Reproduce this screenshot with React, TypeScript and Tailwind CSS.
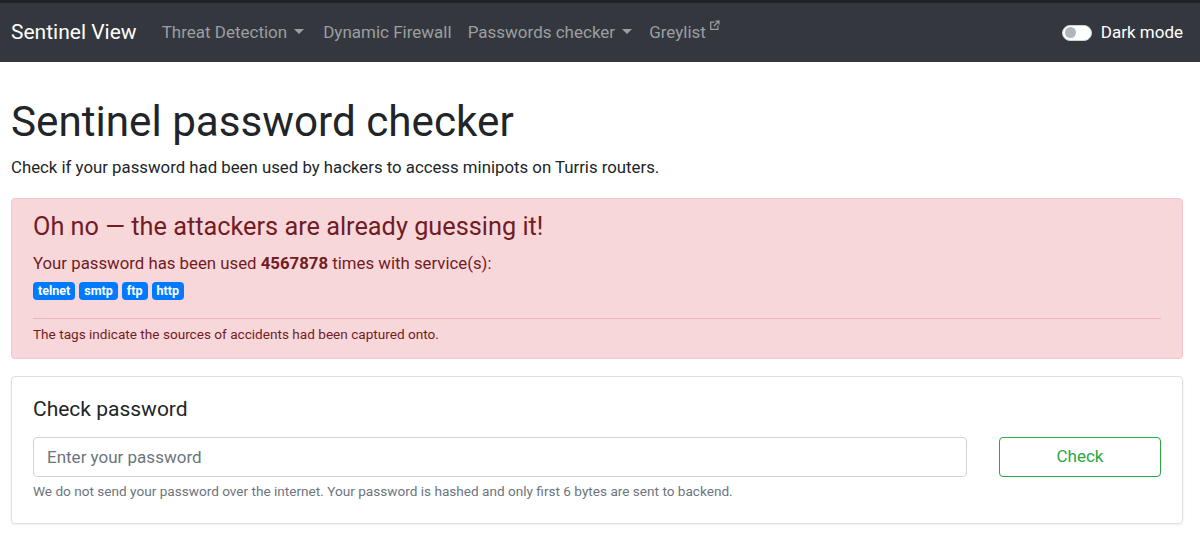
const Caret = () => (
  <span className="ml-[7px] inline-block w-0 h-0 border-x-[5px] border-x-transparent border-t-[5px] border-t-current align-middle translate-y-[-1px]" />
);

const ExternalIcon = () => (
  <svg width="11" height="11" viewBox="0 0 16 16" className="inline-block ml-[3px] -translate-y-[7px]" fill="none" stroke="currentColor" strokeWidth="1.8">
    <path d="M8 3H2.5v10.5H13V8" />
    <path d="M9.5 1.5h5v5" />
    <path d="M14.5 1.5 7 9" />
  </svg>
);

function Navbar() {
  return (
    <nav className="border-t-[3px] border-[#202124] bg-[#34383e] h-[62px] flex items-center pl-[11px] pr-[17px]">
      <span className="text-white text-[21px] mr-[16px] leading-none">Sentinel View</span>
      <div className="flex items-center text-[17px] text-[#9b9ea2]">
        <span className="pl-[9px] pr-[11px] flex items-center">Threat Detection<Caret /></span>
        <span className="px-[8px]">Dynamic Firewall</span>
        <span className="pl-[8px] pr-[9px] flex items-center">Passwords checker<Caret /></span>
        <span className="px-[8px] flex items-center">Greylist<ExternalIcon /></span>
      </div>
      <div className="ml-auto flex items-center gap-[9px]">
        <div className="w-[30px] h-[16px] rounded-full bg-white border border-[#cfd3d7] flex items-center px-[2px]">
          <div className="w-[11px] h-[11px] rounded-full bg-[#adb5bd]" />
        </div>
        <span className="text-white text-[17px]">Dark mode</span>
      </div>
    </nav>
  );
}

const tags = ["telnet", "smtp", "ftp", "http"];

export default function App() {
  return (
    <div className="min-h-[540px] bg-white text-[#212529]" style={{ fontFamily: 'Roboto, "Liberation Sans", sans-serif' }}>
      <Navbar />
      <main className="pl-[11px] pr-[17px] pt-[34px]">
        <h1 className="text-[42.2px] leading-[51px] font-normal mb-[8px]">Sentinel password checker</h1>
        <p className="text-[16.8px] leading-[25.5px] mb-[17px]">
          Check if your password had been used by hackers to access minipots on Turris routers.
        </p>

        <div className="bg-[#f8d7da] border border-[#f5c6cb] rounded-[4px] text-[#721c24] px-[21px] pt-[13px] pb-[14px]">
          <h4 className="text-[25.3px] leading-[30px] mb-[9px]">Oh no — the attackers are already guessing it!</h4>
          <p className="text-[16.8px] leading-[25.5px]">
            Your password has been used <b className="font-bold">4567878</b> times with service(s):
          </p>
          <div className="flex gap-[4px] mt-[6px]">
            {tags.map((t) => (
              <span key={t} className="bg-[#007bff] text-white text-[12.5px] font-bold leading-none h-[18px] px-[5px] rounded-[4px] flex items-center">
                {t}
              </span>
            ))}
          </div>
          <hr className="border-0 border-t border-[#efb3ba] mt-[18px] mb-[5px]" />
          <p className="text-[13.6px] leading-[20px]">The tags indicate the sources of accidents had been captured onto.</p>
        </div>

        <div className="mt-[17px] border border-[#e0e0e0] rounded-[4px] shadow-[0_1px_3px_rgba(0,0,0,0.08)] px-[21px] pt-[20px] pb-[22px]">
          <h5 className="text-[21px] leading-[25px] mb-[15px]">Check password</h5>
          <div className="flex gap-[32px] items-start">
            <div className="flex-1">
              <input
                type="password"
                placeholder="Enter your password"
                className="w-full h-[40px] border border-[#ced4da] rounded-[4px] px-[13px] text-[17px] placeholder:text-[#6c757d] outline-none"
              />
              <p className="text-[13.6px] leading-[20px] text-[#6c757d] mt-[4px]">
                We do not send your password over the internet. Your password is hashed and only first 6 bytes are sent to backend.
              </p>
            </div>
            <button className="w-[162px] h-[40px] border border-[#28a745] rounded-[4px] text-[#28a745] text-[17px] bg-white">
              Check
            </button>
          </div>
        </div>
      </main>
    </div>
  );
}
